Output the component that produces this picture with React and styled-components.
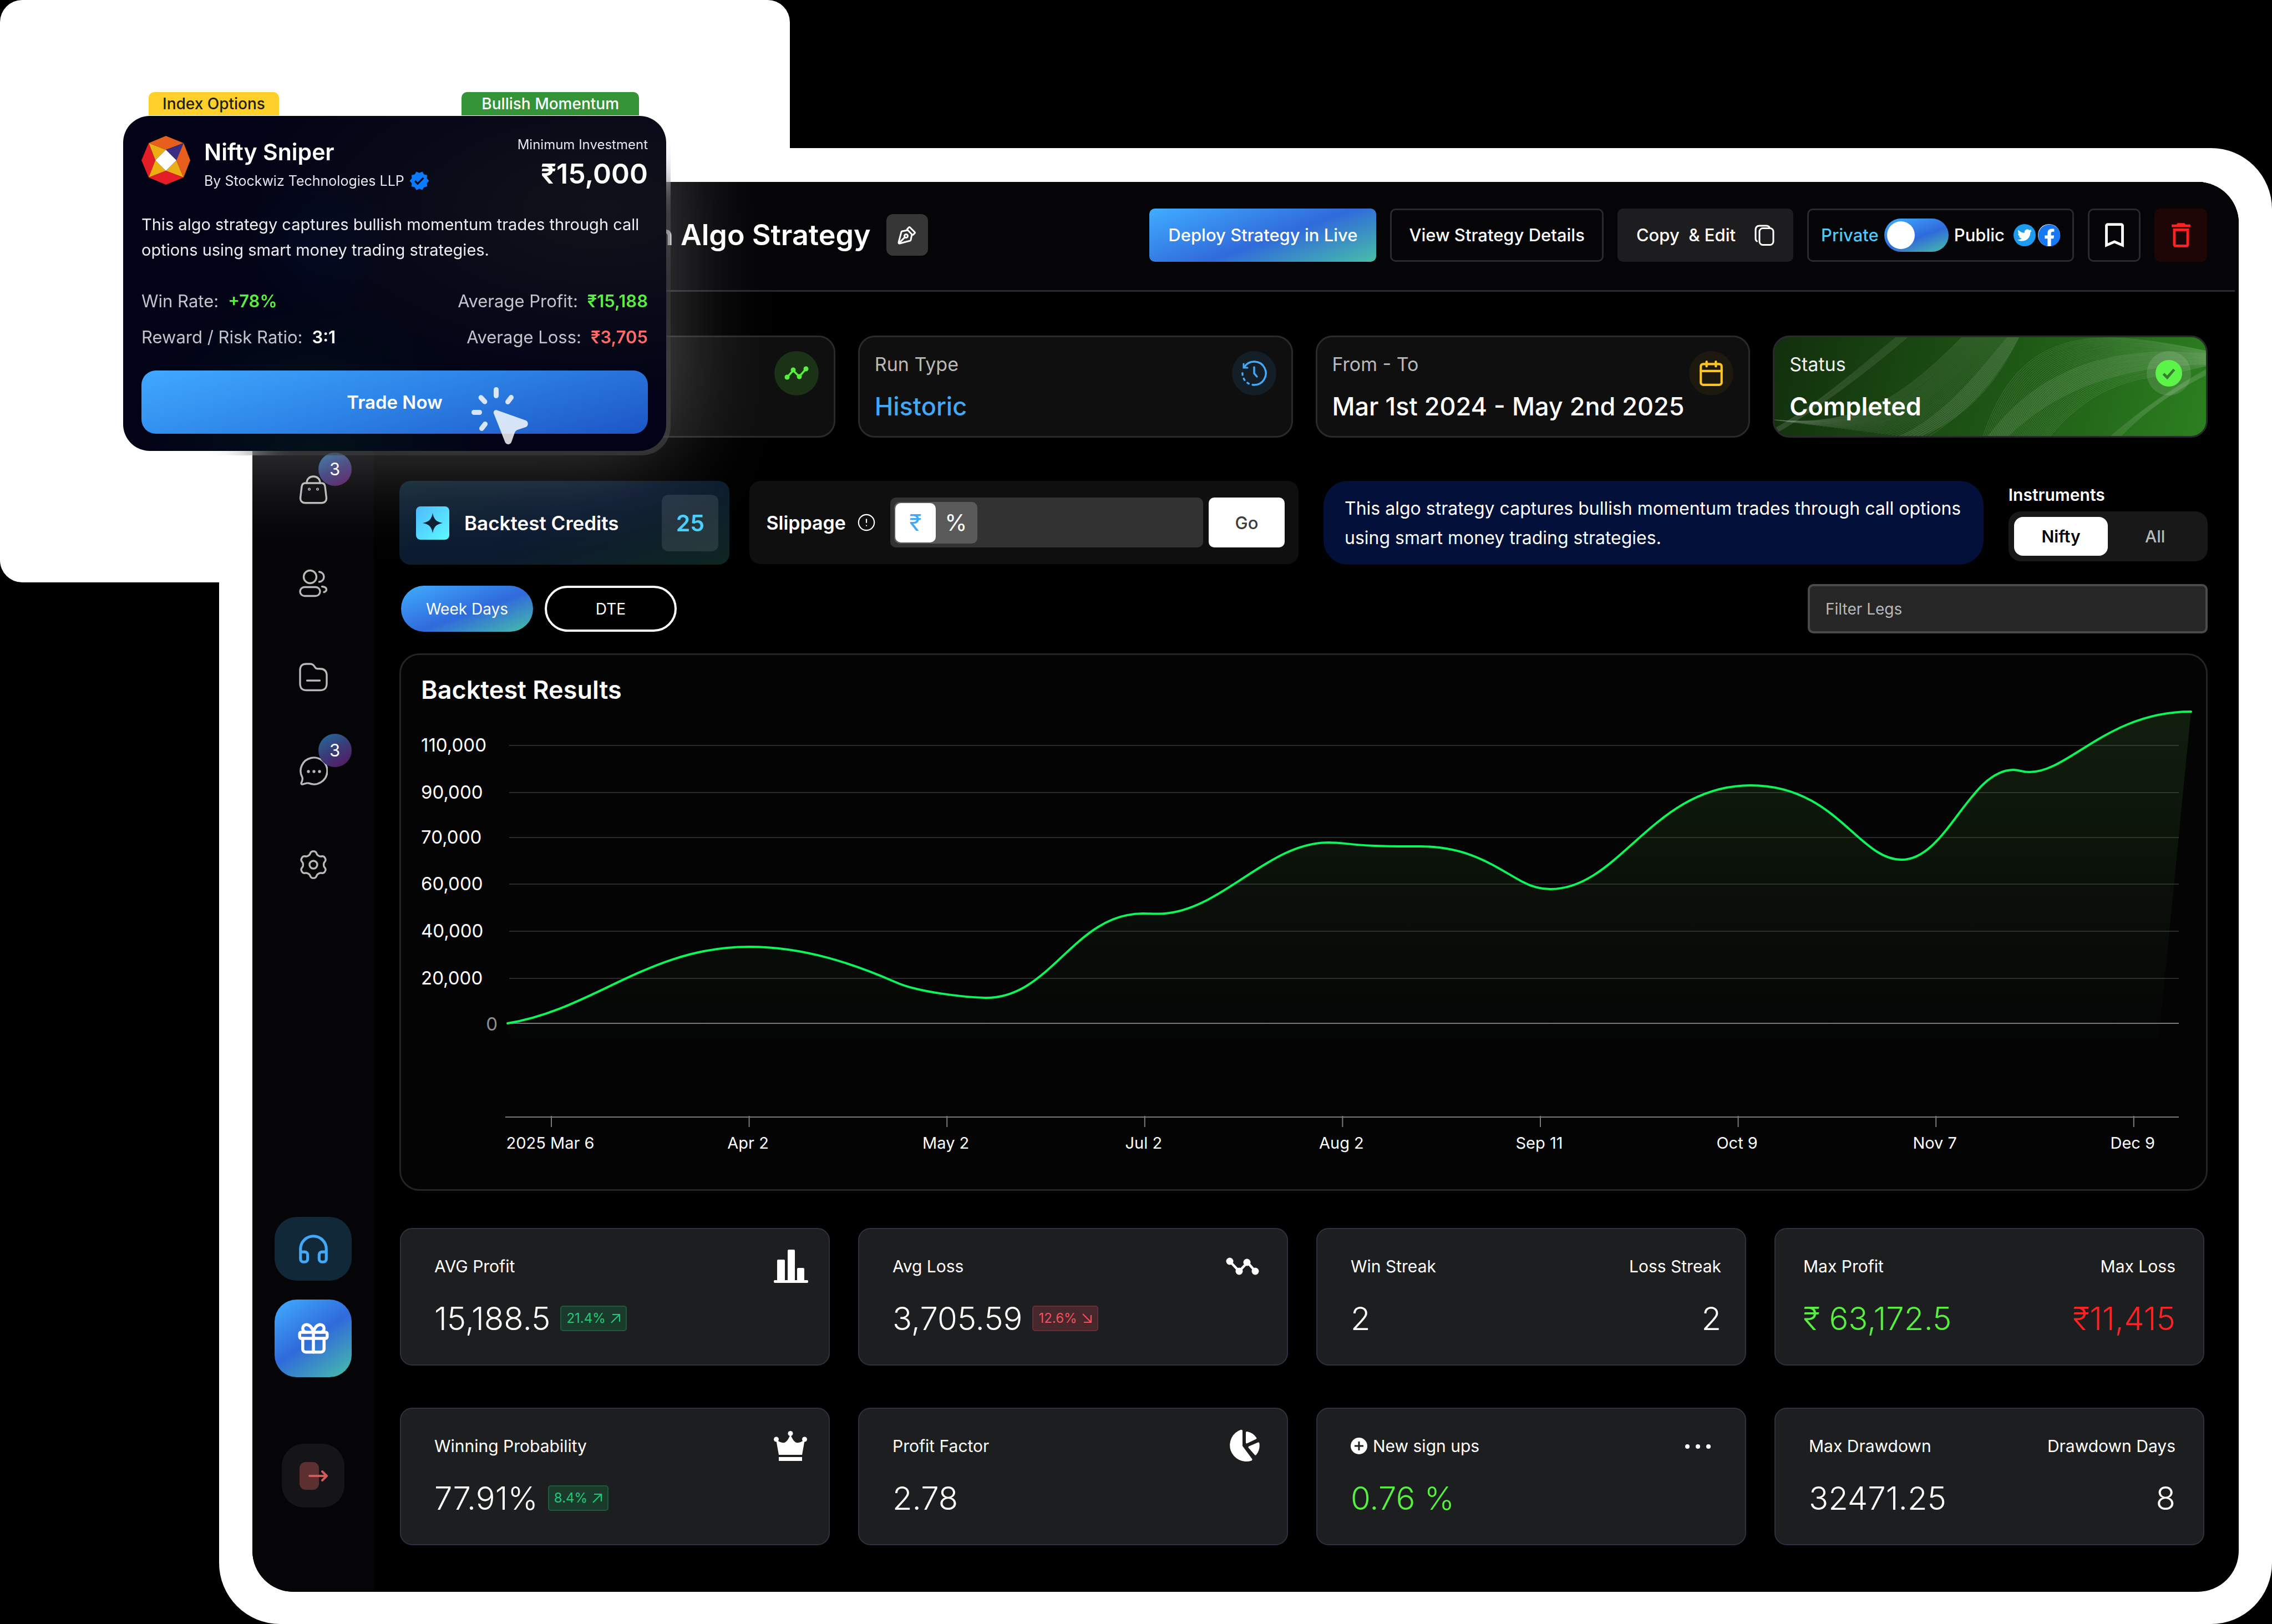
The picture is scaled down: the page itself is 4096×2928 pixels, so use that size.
import React, { useState } from "react";
import styled, { createGlobalStyle, css } from "styled-components";
import { Calendar, CircleAlert, Gift, Headphones, PenTool } from "lucide-react";
import { MdBookmarkBorder, MdDeleteOutline, MdVerified } from "react-icons/md";
import { FaFacebook, FaTwitter } from "react-icons/fa";

const GlobalStyle = createGlobalStyle`
  *, *::before, *::after { box-sizing: border-box; }
  body { margin: 0; background: #000; color: #fff; font-family: Inter, "Liberation Sans", sans-serif; }
  button, input { font: inherit; color: inherit; border: 0; background: none; padding: 0; margin: 0; }
  button { cursor: pointer; }
  h1, h2, p, dl, dt, dd { margin: 0; font-weight: inherit; font-size: inherit; }
  a { color: inherit; text-decoration: none; }
  svg { display: block; flex: none; }
`;

const brandGradient = "linear-gradient(160deg, #40adff 0%, #306adb 55%, #48bfa8 100%)";
const aqua = "#50c8f8";
const lime = "#58f03f";

/* ---------- page frame ---------- */

const Stage = styled.div`
  position: relative;
  min-height: 100vh;
  padding: 267px 0 0 395px;
  background: #000;
`;

const Backplate = styled.div`
  position: absolute;
  top: 0;
  left: 0;
  width: 1424px;
  height: 1050px;
  border-radius: 40px;
  background: #fff;
`;

const Frame = styled.div`
  position: relative;
  padding: 61px 60px 58px 60px;
  border-radius: 110px;
  border-top-left-radius: 0;
  background: #fff;
`;

const Dashboard = styled.div`
  display: flex;
  overflow: hidden;
  border-radius: 74px;
  background: #000;
`;

/* ---------- sidebar ---------- */

const Sidebar = styled.aside`
  display: flex;
  flex-direction: column;
  flex: none;
  align-items: center;
  width: 219px;
  padding: 470px 0 152px;
  background: #050507;
`;

const Nav = styled.nav`
  display: flex;
  flex-direction: column;
`;

const NavLink = styled.a`
  position: relative;
  display: grid;
  place-items: center;
  width: 140px;
  height: 169px;
  color: #b9b9b9;
`;

const NavBadge = styled.span`
  position: absolute;
  top: 18px;
  left: 79px;
  width: 60px;
  height: 60px;
  border-radius: 50%;
  background: linear-gradient(150deg, #246e9c, #3a3b78 50%, #5b1560);
  color: #fff;
  font-size: 31px;
  line-height: 60px;
  text-align: center;
`;

const SideActions = styled.div`
  display: flex;
  flex-direction: column;
  align-items: center;
  gap: 34px;
  margin-top: auto;
`;

const SideButton = styled.button`
  display: grid;
  place-items: center;
  width: ${(p) => (p.$compact ? 113 : 139)}px;
  height: ${(p) => (p.$tall ? 140 : 115)}px;
  margin-top: ${(p) => (p.$apart ? 86 : 0)}px;
  border-radius: 40px;
  background: ${(p) => p.$fill};
  color: ${(p) => p.$color};
`;

/* ---------- header ---------- */

const Main = styled.main`
  flex: 1;
  min-width: 0;
`;

const Header = styled.header`
  display: flex;
  align-items: center;
  justify-content: space-between;
  height: 198px;
  margin-right: 7px;
  padding: 0 50px 4px 508px;
  border-bottom: 3px solid #2a2a2c;
  background: #050507;
  box-shadow: 7px -3px 0 #050507;
`;

const TitleGroup = styled.div`
  display: flex;
  align-items: center;
  gap: 28px;
`;

const Title = styled.h1`
  font-size: 52px;
  font-weight: 600;
  line-height: 64px;
  white-space: nowrap;
`;

const EditButton = styled.button`
  display: grid;
  place-items: center;
  width: 75px;
  height: 75px;
  border-radius: 12px;
  background: #363637;

  svg { transform: scaleY(-1); }
`;

const Actions = styled.div`
  display: flex;
  gap: 25px;
`;

const actionBox = css`
  display: flex;
  align-items: center;
  justify-content: center;
  height: 96px;
  border-radius: 10px;
  font-size: 31px;
  font-weight: 500;
  white-space: nowrap;
`;

const ActionButton = styled.button`
  ${actionBox}
  gap: 34px;
  padding: 0 31px;
  border: 3px solid ${(p) => p.$border || "transparent"};
  background: ${(p) => p.$fill || "transparent"};
  background-origin: border-box;
  color: ${(p) => p.$color || "#fff"};
  ${(p) => p.$square && "width: 95px; padding: 0;"}
`;

const Visibility = styled.label`
  ${actionBox}
  gap: 10px;
  padding: 0 22px;
  border: 3px solid #2a2a2c;
`;

const PrivateText = styled.span`
  color: ${aqua};
`;

const Switch = styled.input.attrs({ type: "checkbox", role: "switch" })`
  appearance: none;
  position: relative;
  width: 116px;
  height: 60px;
  border-radius: 30px;
  background: ${brandGradient};

  &::after {
    content: "";
    position: absolute;
    top: 5px;
    left: 5px;
    width: 50px;
    height: 50px;
    border-radius: 50%;
    background: #fff;
  }

  &:checked::after { left: 61px; }
`;

const Socials = styled.span`
  display: flex;
  gap: 4px;
  margin-left: 6px;
`;

const SocialDot = styled.span`
  display: grid;
  place-items: center;
  width: 40px;
  height: 40px;
  border-radius: 50%;
  background: ${(p) => p.$fill};
  color: ${(p) => p.$color};
`;

/* ---------- content ---------- */

const Content = styled.div`
  display: flex;
  flex-direction: column;
  padding: 79px 56px 84px 46px;
`;

const SummaryGrid = styled.section`
  display: grid;
  grid-template-columns: repeat(4, 1fr);
  gap: 41px;
  padding-left: 2px;
`;

const SummaryCard = styled.div`
  position: relative;
  display: flex;
  justify-content: space-between;
  height: 184px;
  padding: 25px 27px;
  overflow: hidden;
  border: 3px solid #2a2a2c;
  border-radius: 30px;
  background: ${(p) => p.$fill || "#0f0f10"};
`;

const SummaryText = styled.dl`
  position: relative;
`;

const SummaryLabel = styled.dt`
  color: ${(p) => p.$color || "#b9b9b9"};
  font-size: 34px;
  line-height: 48px;
`;

const SummaryValue = styled.dd`
  padding-top: 22px;
  color: ${(p) => p.$color || "#fff"};
  font-size: 45px;
  font-weight: ${(p) => (p.$strong ? 600 : 500)};
  line-height: 60px;
  white-space: nowrap;
`;

const SummaryIcon = styled.span`
  position: relative;
  display: grid;
  place-items: center;
  flex: none;
  width: 80px;
  height: 80px;
  border-radius: 50%;
  background: ${(p) => p.$fill};
  color: ${(p) => p.$color};
`;

const WavePattern = styled.svg`
  position: absolute;
  inset: 0;
  width: 100%;
  height: 100%;
`;

const ToolRow = styled.section`
  display: grid;
  grid-template-columns: minmax(0, 1620fr) minmax(0, 1189fr) minmax(0, 359fr);
  gap: 45px;
  margin-top: 78px;
`;

const ToolPair = styled.div`
  display: grid;
  grid-template-columns: minmax(0, 595fr) minmax(0, 989fr);
  gap: 36px;
`;

const Credits = styled.div`
  display: flex;
  align-items: center;
  height: 151px;
  padding: 0 20px 0 30px;
  border-radius: 20px;
  background: linear-gradient(160deg, #0c2230 0%, #0c1a30 50%, #0f2622 100%);
  font-size: 35px;
  font-weight: 600;
  white-space: nowrap;
`;

const CreditsMark = styled.span`
  display: grid;
  place-items: center;
  width: 60px;
  height: 60px;
  margin-right: 27px;
  border-radius: 8px;
  background: linear-gradient(135deg, #48b8ff, #5cfaff);
`;

const CreditsCount = styled.strong`
  display: grid;
  place-items: center;
  width: 102px;
  height: 102px;
  margin-left: auto;
  border-radius: 12px;
  background: rgba(255, 255, 255, 0.1);
  color: #4ccffb;
  font-size: 41px;
  font-weight: 600;
`;

const Slippage = styled.form`
  display: flex;
  align-items: center;
  height: 150px;
  padding: 0 25px 0 30px;
  border-radius: 20px;
  background: #0f0f10;
`;

const SlippageLabel = styled.label`
  display: flex;
  align-items: center;
  gap: 20px;
  margin-right: 26px;
  font-size: 34px;
  font-weight: 600;
`;

const AmountBox = styled.div`
  display: flex;
  align-items: center;
  flex: 1;
  min-width: 0;
  height: 90px;
  padding: 0 7px;
  border-radius: 10px;
  background: #323232;
`;

const AmountInput = styled.input`
  flex: 1;
  min-width: 0;
  height: 76px;
  padding: 0 20px;
  outline: 0;
  font-size: 31px;
`;

const UnitToggle = styled.div`
  display: flex;
  flex: none;
  width: 150px;
  padding: 2px;
  border-radius: 10px;
  background: #5a5a5a;
`;

const UnitButton = styled.button`
  flex: 1;
  height: 71px;
  border-radius: 10px;
  background: ${(p) => (p.$active ? "#fff" : "transparent")};
  color: ${(p) => (p.$active ? "#42a8f8" : "#fff")};
  font-size: 41px;
`;

const GoButton = styled.button`
  width: 137px;
  height: 90px;
  margin-left: 10px;
  border-radius: 10px;
  background: #fff;
  color: #3c3c3e;
  font-size: 31px;
  font-weight: 500;
`;

const Note = styled.p`
  display: flex;
  align-items: center;
  height: 151px;
  padding: 0 38px;
  border-radius: 44px;
  background: #02103a;
  font-size: 32px;
  line-height: 53px;
`;

const Instruments = styled.div`
  display: flex;
  flex-direction: column;
  font-size: 30px;
  font-weight: 600;
  line-height: 50px;
`;

const Segments = styled.div`
  display: flex;
  margin-top: 5px;
  padding: 10px;
  border-radius: 22px;
  background: #181819;
`;

const Segment = styled.button`
  flex: 1;
  height: 70px;
  border-radius: 16px;
  background: ${(p) => (p.$active ? "#fff" : "transparent")};
  color: ${(p) => (p.$active ? "#050507" : "#b9b9b9")};
  font-size: 30px;
  font-weight: ${(p) => (p.$active ? 600 : 500)};
`;

const FilterRow = styled.section`
  display: flex;
  align-items: center;
  justify-content: space-between;
  margin-top: 35px;
`;

const Pills = styled.div`
  display: flex;
  gap: 21px;
  padding-left: 3px;
`;

const Pill = styled.button`
  width: 238px;
  height: 83px;
  border: ${(p) => (p.$active ? "0" : "4px solid #fff")};
  border-radius: 42px;
  background: ${(p) => (p.$active ? brandGradient : "transparent")};
  font-size: 28px;
`;

const FilterInput = styled.input`
  width: 721px;
  height: 89px;
  padding: 0 28px;
  border: 4px solid #4a4a4b;
  border-radius: 10px;
  background: #262626;
  font-size: 28px;

  &::placeholder { color: #b9b9b9; opacity: 1; }
`;

/* ---------- chart ---------- */

const ChartCard = styled.section`
  margin-top: 36px;
  padding-top: 36px;
  border: 3px solid #242426;
  border-radius: 36px;
  background: #040405;
`;

const ChartTitle = styled.h2`
  padding-left: 36px;
  font-size: 45px;
  font-weight: 600;
  line-height: 54px;
`;

const ChartSvg = styled.svg`
  width: 100%;
  height: auto;
`;

const AxisText = styled.text`
  fill: ${(p) => (p.$muted ? "#8f8f8f" : "#fff")};
  font-size: ${(p) => (p.$small ? 29 : 33)}px;
`;

/* ---------- stats ---------- */

const StatsGrid = styled.section`
  display: grid;
  grid-template-columns: repeat(4, 1fr);
  gap: 76px 51px;
  margin-top: 67px;
  padding: 0 6px 0 1px;
`;

const StatCard = styled.article`
  display: flex;
  justify-content: space-between;
  height: 248px;
  padding: 36px ${(p) => p.$end}px 0 ${(p) => p.$start || 60}px;
  border: 2px solid #2e323e;
  border-radius: 22px;
  background: #1d1e1f;
`;

const Stat = styled.dl`
  padding-top: 10px;
  text-align: ${(p) => (p.$right ? "right" : "left")};
`;

const StatLabel = styled.dt`
  display: flex;
  align-items: center;
  justify-content: ${(p) => (p.$right ? "flex-end" : "flex-start")};
  gap: 10px;
  font-size: 30px;
  line-height: 42px;
`;

const StatValue = styled.dd`
  display: flex;
  align-items: center;
  justify-content: ${(p) => (p.$right ? "flex-end" : "flex-start")};
  gap: 18px;
  padding-top: 35px;
  color: ${(p) => p.$color || "#fff"};
  font-size: 58px;
  font-weight: 300;
  line-height: 76px;
  white-space: nowrap;
`;

const Delta = styled.span`
  display: flex;
  align-items: center;
  gap: 8px;
  height: 46px;
  padding: 0 9px;
  border: 2px solid ${(p) => (p.$down ? "#6b2b33" : "#1d5a3b")};
  border-radius: 5px;
  background: ${(p) => (p.$down ? "#46272b" : "#1a3a2b")};
  color: ${(p) => (p.$down ? "#f0525f" : "#22c878")};
  font-size: 24px;
  font-weight: 400;
  line-height: 40px;
`;

const StatIcon = styled.span`
  display: grid;
  place-items: center;
  width: 62px;
  height: 62px;
`;

const MoreButton = styled.button`
  display: flex;
  gap: 11px;
  height: 14px;
  margin-top: 28px;

  i {
    width: 8px;
    height: 8px;
    border-radius: 50%;
    background: #fff;
  }
`;

/* ---------- floating strategy card ---------- */

const Promo = styled.aside`
  position: absolute;
  top: 166px;
  left: 222px;
  width: 979px;
`;

const Tabs = styled.div`
  position: relative;
  z-index: 1;
  display: flex;
  justify-content: space-between;
  padding: 0 49px 0 46px;
`;

const Tab = styled.span`
  padding: 0 ${(p) => (p.$wide ? 36 : 25)}px;
  border-radius: 10px 10px 0 0;
  background: ${(p) => p.$fill};
  color: ${(p) => p.$color};
  font-size: 28px;
  font-weight: 500;
  line-height: 42px;
`;

const Glass = styled.div`
  position: relative;
  margin: 1px -8px 0 0;
  padding: 0 8px 8px 0;
  border-radius: 52px;
  background: rgba(255, 255, 255, 0.19);
  backdrop-filter: blur(36px);
  box-shadow: 0 0 180px rgba(255, 255, 255, 0.27);
`;

const PromoCard = styled.div`
  padding: 36px 33px 31px;
  border-radius: 48px;
  background:
    radial-gradient(circle at 36% 38%, rgba(0, 20, 60, 0.3), transparent 18%),
    radial-gradient(ellipse at 88% 28%, #10121a, transparent 55%),
    radial-gradient(ellipse at 35% 100%, #03111a, transparent 35%),
    #020316;
`;

const PromoHead = styled.div`
  display: flex;
  justify-content: space-between;
`;

const PromoIdentity = styled.div`
  display: flex;
  gap: 25px;
`;

const PromoName = styled.h2`
  font-size: 41px;
  font-weight: 600;
  line-height: 58px;
`;

const PromoAuthor = styled.p`
  display: flex;
  align-items: center;
  gap: 8px;
  color: #e6e6ee;
  font-size: 25px;
  line-height: 46px;

  svg { color: #0a7cff; }
`;

const PromoPrice = styled.div`
  color: #e6e6ee;
  font-size: 24px;
  line-height: 32px;
  text-align: right;

  strong {
    display: block;
    color: #fff;
    font-size: 50px;
    font-weight: 600;
    line-height: 72px;
  }
`;

const PromoText = styled.p`
  margin-top: 33px;
  color: #eeeef2;
  font-size: 29px;
  line-height: 46px;
`;

const PromoStats = styled.dl`
  display: grid;
  grid-template-columns: auto auto;
  justify-content: space-between;
  gap: 25px 0;
  margin-top: 49px;
  font-size: 31px;
  line-height: 40px;
`;

const PromoStat = styled.div`
  display: flex;
  justify-content: ${(p) => (p.$right ? "flex-end" : "flex-start")};
  gap: 17px;

  dt { color: #c3c4cc; }
  dd { color: ${(p) => p.$color || "#fff"}; font-weight: 600; }
`;

const TradeButton = styled.button`
  position: relative;
  width: 100%;
  height: 114px;
  margin-top: 40px;
  border-radius: 26px;
  background: linear-gradient(165deg, #40a9ff 0%, #2e86e8 45%, #1d55c6 100%);
  font-size: 33px;
  font-weight: 600;

  svg {
    position: absolute;
    top: 30px;
    left: 595px;
  }
`;

/* ---------- drawings ---------- */

const lineIcon = {
  width: 52,
  height: 52,
  viewBox: "0 0 52 52",
  fill: "none",
  stroke: "currentColor",
  strokeWidth: 3.4,
  strokeLinecap: "round",
  strokeLinejoin: "round",
};

const BagIcon = () => (
  <svg {...lineIcon}>
    <path d="M11.500 14h29c4 0 6 2.200 6.500 6l2.400 20c.6 6-3 9.800-9 9.800H11.600c-6 0-9.600-3.800-9-9.800L5 20c.5-3.800 2.500-6 6.500-6z" />
    <path d="M14 14C14 6.500 19 2 26 2s12 4.500 12 12" />
    <circle cx="18.500" cy="25" r="0.800" />
    <circle cx="33.500" cy="25" r="0.800" />
  </svg>
);

const UsersIcon = () => (
  <svg {...lineIcon}>
    <circle cx="20" cy="14" r="11.500" />
    <rect x="2" y="32.500" width="36" height="16" rx="8" ry="8" />
    <path d="M36.500 5c5 .5 8.500 4.300 8.500 9s-3.500 8.500-8.500 9" />
    <path d="M41.500 31.500c5 .5 8 2.500 8 5.200 0 2.300-1.500 4-4.500 4.800" />
  </svg>
);

const FolderIcon = () => (
  <svg {...lineIcon}>
    <path d="M2 16v-2C2 5.500 5.500 2 14 2h6c4 0 5.500 1 7.500 4l2 2.800c1 1.500 2.200 2 4.500 2h3.500C46 10.800 50 14.500 50 23v14c0 9-4 12.500-12.500 12.500H14C5.500 49.500 2 46 2 37z" />
    <path d="M14.500 32h23" />
  </svg>
);

const ChatIcon = () => (
  <svg {...lineIcon}>
    <path d="M18 48.200A24 24 0 1 0 6 37.600c1 3 .2 5.600-1.600 9.400-.8 2 .2 3.400 2.200 3 3.900-.6 7.900-3.200 11.400-1.800z" />
    <g fill="currentColor" strokeWidth="1.500">
      <circle cx="17" cy="27" r="1.900" />
      <circle cx="27" cy="27" r="1.900" />
      <circle cx="37" cy="27" r="1.900" />
    </g>
  </svg>
);

const gearPath = (() => {
  const points = [];
  for (let i = 0; i < 180; i += 1) {
    const a = (i / 180) * Math.PI * 2;
    const r = 21.4 - 3 * Math.tanh(1.5 * Math.cos(6 * a));
    points.push(`${(26 + r * Math.cos(a)).toFixed(2)} ${(26 + r * Math.sin(a)).toFixed(2)}`);
  }
  return `M${points.join("L")}Z`;
})();

const GearIcon = () => (
  <svg {...lineIcon}>
    <path d={gearPath} />
    <circle cx="26" cy="26" r="7" />
  </svg>
);

const ExitIcon = () => (
  <svg width="52" height="52" viewBox="0 0 52 52" fill="none" stroke="#cf5a5a" strokeWidth="4" strokeLinecap="round" strokeLinejoin="round">
    <rect x="1" y="1" width="35" height="50" rx="11" fill="#5c3031" stroke="none" />
    <path d="M19 26h31M42 18l8 8-8 8" />
  </svg>
);

const CopyIcon = () => (
  <svg width="36" height="38" viewBox="0 0 36 38" fill="none" stroke="currentColor" strokeWidth="3">
    <rect x="9" y="6.500" width="25" height="30" rx="6" />
    <path d="M4.500 30C2.800 29 2 27.500 2 25V9.500C2 4.500 4.500 2 9.500 2H21c3 0 5 .8 6.200 3" strokeLinecap="round" />
  </svg>
);

const HistoryIcon = () => (
  <svg width="48" height="48" viewBox="0 0 48 48" fill="none" stroke="currentColor" strokeWidth="3.500" strokeLinecap="round">
    <path d="M24 45a21 21 0 1 0-17.500-32.500" />
    <path d="M24 45A21 21 0 0 1 3.500 19" strokeDasharray="3 7" />
    <path d="M5 7v7h7" strokeWidth="3" />
    <path d="M24 13v11l5 6" />
  </svg>
);

const CheckIcon = () => (
  <svg width="48" height="48" viewBox="0 0 50 50">
    <circle cx="25" cy="25" r="25" fill="#5cf449" />
    <path d="M15 26l7 7 13-15" fill="none" stroke="#3a7a31" strokeWidth="5" />
  </svg>
);

const TrendIcon = () => (
  <svg width="44" height="26" viewBox="0 0 44 26" fill="currentColor">
    <path d="M5 20L16 8l11 11L39 5" fill="none" stroke="currentColor" strokeWidth="3.500" />
    <circle cx="5" cy="20" r="4.500" />
    <circle cx="16" cy="7" r="4.500" />
    <circle cx="27" cy="19" r="4.500" />
    <circle cx="39" cy="5" r="4.500" />
  </svg>
);

const SparkIcon = () => (
  <svg width="36" height="36" viewBox="0 0 36 36" fill="#0d1d30">
    <path d="M18 0c2 10.500 6 16 18 18-12 2-16 7.500-18 18-2-10.500-6-16-18-18C12 16 16 10.500 18 0z" />
  </svg>
);

const BarsIcon = () => (
  <svg width="62" height="60" viewBox="0 0 62 60" fill="#fff">
    <rect x="6" y="18" width="14" height="40" rx="2" />
    <rect x="25" y="0" width="13" height="58" rx="2" />
    <rect x="42" y="33" width="13" height="25" rx="2" />
    <rect x="0" y="55" width="62" height="5" rx="2" />
  </svg>
);

const DropIcon = () => (
  <svg width="60" height="34" viewBox="0 0 60 34" fill="#fff">
    <path d="M7 8l17 18L39 10l14 16" fill="none" stroke="#fff" strokeWidth="4.500" />
    <circle cx="7" cy="8" r="6.500" />
    <circle cx="24" cy="26" r="6.500" />
    <circle cx="38" cy="10" r="6.500" />
    <circle cx="53" cy="26" r="6.500" />
  </svg>
);

const CrownIcon = () => (
  <svg width="60" height="54" viewBox="0 0 60 54" fill="#fff">
    <path d="M4 15c6 5 11 7 15 6 4-1 8-7 11-15 3 8 7 14 11 15 4 1 9-1 15-6l-5 28H9z" />
    <circle cx="4.500" cy="15" r="4.500" />
    <circle cx="30" cy="4.500" r="4.500" />
    <circle cx="55.500" cy="15" r="4.500" />
    <rect x="9" y="47" width="42" height="7" />
  </svg>
);

const PieIcon = () => (
  <svg width="58" height="60" viewBox="0 0 58 60" fill="#fff">
    <path d="M27 3v27l17 23c1 1.500.8 2.500-.8 3.400A29 29 0 1 1 24 .8c2-.2 3 .6 3 2.200z" />
    <path d="M33 6c0-1.500.8-2.400 2.500-2A26 26 0 0 1 52 15c.8 1.200.5 2-.8 2.700L36 25c-2 1-3 .3-3-1.600z" />
    <path d="M54.500 23.800c1.600-.7 2.600-.2 2.900 1.500a27 27 0 0 1-5.500 20.500c-1.100 1.400-2.200 1.400-3.200 0L38 33.500c-.9-1.300-.7-2.300.8-3z" />
  </svg>
);

const PlusDot = () => (
  <svg width="30" height="30" viewBox="0 0 30 30">
    <circle cx="15" cy="15" r="15" fill="#fff" />
    <path d="M15 7v16M7 15h16" stroke="#1d1e1f" strokeWidth="3" />
  </svg>
);

const DeltaArrow = ({ down }) => (
  <svg width="19" height="18" viewBox="0 0 19 18" fill="none" stroke="currentColor" strokeWidth="2.200">
    {down ? <path d="M2 1l15 15M17 3v13H4" /> : <path d="M2 17L17 2M4 2h13v13" />}
  </svg>
);

const NiftyLogo = () => (
  <svg width="88" height="88" viewBox="0 0 88 88">
    <path d="M44 0l32 13-32 12-31-12z" fill="#e65f1c" />
    <path d="M76 13L63 44 44 25z" fill="#3a2e82" />
    <path d="M13 13l31 12-19 19z" fill="#ecae12" />
    <path d="M13 13l12 31-12 31L0 44z" fill="#e41e26" />
    <path d="M13 75l12-31 19 19z" fill="#ecae12" />
    <path d="M76 75L44 63l19-19z" fill="#ecae12" />
    <path d="M76 13l12 31-12 31-13-31z" fill="#e65f1c" />
    <path d="M13 75l31-12 32 12-32 13z" fill="#e41e26" />
    <path d="M44 25l19 19-19 19-19-19z" fill="#fff" />
  </svg>
);

const ClickIcon = () => (
  <svg width="104" height="104" viewBox="0 0 104 104" fill="#fff" fillOpacity="0.82">
    <rect x="40" y="0" width="9" height="20" rx="4.500" />
    <rect x="0" y="41" width="19" height="9" rx="4.500" />
    <rect x="11" y="18" width="19" height="9" rx="4.500" transform="rotate(47 20.500 22.500)" />
    <rect x="59" y="18" width="19" height="9" rx="4.500" transform="rotate(-52 68.500 22.500)" />
    <rect x="12" y="66" width="19" height="9" rx="4.500" transform="rotate(-52 21.500 70.500)" />
    <path d="M40 47c-1-4 2.500-7 6.500-5.300L98 60c5 2 5 10 0 12L83 77c-2.500 1-4 2.500-5 5l-6 17c-2 5.500-9.500 5.500-11.500 0z" />
  </svg>
);

const lerpPath = (a, b, t) => {
  const n = a.map((v, i) => (v + (b[i] - v) * t).toFixed(1));
  return `M${n[0]} ${n[1]}C${n.slice(2).join(" ")}`;
};

const ribbons = [
  { from: [-10, 148, 150, 165, 230, 110, 342, -4], to: [270, 184, 340, 140, 390, 90, 443, -4], lines: 44 },
  { from: [374, 184, 440, -20, 570, -20, 783, 26], to: [492, 184, 590, 60, 680, 80, 783, 50], lines: 40 },
  { from: [-10, 170, 60, 135, 160, 50, 224, -4], to: [-6, 178, 70, 135, 170, 60, 244, -4], lines: 9 },
  { from: [600, 184, 660, 130, 720, 90, 783, 55], to: [618, 184, 670, 130, 730, 90, 790, 62], lines: 9 },
];

const Waves = () => (
  <WavePattern viewBox="0 0 777 178" preserveAspectRatio="none" fill="none" stroke="#fff" aria-hidden="true">
    {ribbons.map((r, k) =>
      Array.from({ length: r.lines }, (_, i) => (
        <path key={`${k}-${i}`} d={lerpPath(r.from, r.to, i / (r.lines - 1))} strokeOpacity="0.11" strokeWidth="1.300" />
      ))
    )}
    <path d="M210 184C300 150 360 70 422-4h20C410 70 350 150 250 184z" fill="#fff" fillOpacity="0.08" stroke="none" />
    <path d="M380 184C470 60 600 10 783 30v20C620 50 500 100 416 184z" fill="#fff" fillOpacity="0.08" stroke="none" />
  </WavePattern>
);

/* ---------- data ---------- */

const yTicks = [
  ["110,000", 1344],
  ["90,000", 1429],
  ["70,000", 1510],
  ["60,000", 1594],
  ["40,000", 1679],
  ["20,000", 1764],
];

const xTicks = ["2025 Mar 6", "Apr 2", "May 2", "Jul 2", "Aug 2", "Sep 11", "Oct 9", "Nov 7", "Dec 9"];

const curvePath = [
  "M915 1845",
  "C1070 1820 1170 1707 1350 1707",
  "C1450 1707 1540 1738 1615 1771",
  "C1655 1789 1740 1798 1776 1799",
  "C1895 1801 1935 1647 2061 1647",
  "C2076 1647 2088 1649 2108 1646",
  "C2210 1632 2290 1519 2395 1519",
  "C2430 1519 2440 1527 2560 1526",
  "C2650 1526 2695 1563 2745 1590",
  "C2762 1599 2778 1603 2795 1603",
  "C2920 1603 2980 1416 3156 1416",
  "C3310 1416 3350 1550 3428 1550",
  "C3510 1550 3550 1388 3630 1388",
  "C3640 1388 3645 1392 3659 1392",
  "C3730 1392 3800 1283 3950 1283",
].join("");

const BacktestChart = () => (
  <ChartSvg viewBox="723 1271 3254 873" role="img" aria-label="Backtest results from March to December">
    <defs>
      <linearGradient id="area" x1="0" y1="0" x2="0" y2="1">
        <stop offset="0" stopColor="#3f7a2c" stopOpacity="0.22" />
        <stop offset="1" stopColor="#3f7a2c" stopOpacity="0.01" />
      </linearGradient>
    </defs>
    {yTicks.map(([label, y]) => (
      <g key={label}>
        <line x1="918" x2="3928" y1={y} y2={y} stroke="#2a2a2b" strokeWidth="2" />
        <AxisText x="759" y={y + 11}>{label}</AxisText>
      </g>
    ))}
    <path d={`${curvePath}L3892 1871L915 1871Z`} fill="url(#area)" />
    <line x1="918" x2="3928" y1="1845" y2="1845" stroke="#7a7a7a" strokeWidth="2" />
    <AxisText x="897" y="1858" textAnchor="end" $muted>0</AxisText>
    <path d={curvePath} fill="none" stroke="#0df55a" strokeWidth="4" strokeLinecap="round" />
    <line x1="911" x2="3928" y1="2014" y2="2014" stroke="#7a7a7a" strokeWidth="2" />
    {xTicks.map((label, i) => {
      const x = 994 + i * 356.6;
      return (
        <g key={label}>
          <line x1={x} x2={x} y1="2012" y2="2032" stroke="#7a7a7a" strokeWidth="2" />
          <AxisText x={x - 2} y="2071" textAnchor="middle" $small>{label}</AxisText>
        </g>
      );
    })}
  </ChartSvg>
);

const navItems = [
  { label: "Orders", Icon: BagIcon, count: 3 },
  { label: "Clients", Icon: UsersIcon },
  { label: "Files", Icon: FolderIcon },
  { label: "Messages", Icon: ChatIcon, count: 3 },
  { label: "Settings", Icon: GearIcon },
];

const statCards = [
  { end: 37, icon: BarsIcon, stats: [{ label: "AVG Profit", value: "15,188.5", delta: "21.4%" }] },
  { end: 49, icon: DropIcon, stats: [{ label: "Avg Loss", value: "3,705.59", delta: "12.6%", down: true }] },
  { end: 43, stats: [{ label: "Win Streak", value: "2" }, { label: "Loss Streak", value: "2" }] },
  {
    start: 50,
    end: 50,
    stats: [
      { label: "Max Profit", value: "₹ 63,172.5", color: lime },
      { label: "Max Loss", value: "₹11,415", color: "#ff2222" },
    ],
  },
  { end: 38, icon: CrownIcon, stats: [{ label: "Winning Probability", value: "77.91%", delta: "8.4%" }] },
  { end: 47, icon: PieIcon, stats: [{ label: "Profit Factor", value: "2.78" }] },
  { end: 62, more: true, stats: [{ label: "New sign ups", value: "0.76 %", color: lime, plus: true }] },
  { end: 50, stats: [{ label: "Max Drawdown", value: "32471.25" }, { label: "Drawdown Days", value: "8" }] },
];

export default function App() {
  const [unit, setUnit] = useState("₹");
  const [instrument, setInstrument] = useState("Nifty");
  const [mode, setMode] = useState("Week Days");

  return (
    <Stage>
      <GlobalStyle />
      <Backplate />
      <Frame>
        <Dashboard>
          <Sidebar>
            <Nav aria-label="Main">
              {navItems.map(({ label, Icon, count }) => (
                <NavLink key={label} href={`#${label.toLowerCase()}`} aria-label={label}>
                  <Icon />
                  {count && <NavBadge>{count}</NavBadge>}
                </NavLink>
              ))}
            </Nav>
            <SideActions>
              <SideButton $fill="#112838" $color="#42a8f8" aria-label="Support">
                <Headphones size={62} strokeWidth={2} />
              </SideButton>
              <SideButton $fill="linear-gradient(145deg, #40adff 0%, #306adb 50%, #48bfa8 100%)" $color="#fff" $tall aria-label="Rewards">
                <Gift size={66} strokeWidth={2} />
              </SideButton>
              <SideButton $fill="#151517" $compact $apart aria-label="Log out">
                <ExitIcon />
              </SideButton>
            </SideActions>
          </Sidebar>

          <Main>
            <Header>
              <TitleGroup>
                <Title>n Algo Strategy</Title>
                <EditButton aria-label="Rename strategy">
                  <PenTool size={36} strokeWidth={2} />
                </EditButton>
              </TitleGroup>
              <Actions>
                <ActionButton $fill={brandGradient}>Deploy Strategy in Live</ActionButton>
                <ActionButton $border="#2a2a2c">View Strategy Details</ActionButton>
                <ActionButton $fill="#1d1d1f">
                  Copy&nbsp; &amp; Edit
                  <CopyIcon />
                </ActionButton>
                <Visibility>
                  <PrivateText>Private</PrivateText>
                  <Switch aria-label="Public strategy" />
                  Public
                  <Socials>
                    <SocialDot $fill="#1d9bf0" $color="#fff">
                      <FaTwitter size={26} />
                    </SocialDot>
                    <SocialDot $fill="#fff" $color="#1877f2">
                      <FaFacebook size={41} />
                    </SocialDot>
                  </Socials>
                </Visibility>
                <ActionButton $square $border="#2a2a2c" aria-label="Bookmark">
                  <MdBookmarkBorder size={58} />
                </ActionButton>
                <ActionButton $square $fill="#1e0607" $color="#ff2222" aria-label="Delete">
                  <MdDeleteOutline size={58} />
                </ActionButton>
              </Actions>
            </Header>

            <Content>
              <SummaryGrid>
                <SummaryCard>
                  <span />
                  <SummaryIcon $fill="#1b3216" $color={lime}>
                    <TrendIcon />
                  </SummaryIcon>
                </SummaryCard>
                <SummaryCard>
                  <SummaryText>
                    <SummaryLabel>Run Type</SummaryLabel>
                    <SummaryValue $color="#42a8f8">Historic</SummaryValue>
                  </SummaryText>
                  <SummaryIcon $fill="#131e27" $color="#42a8f8">
                    <HistoryIcon />
                  </SummaryIcon>
                </SummaryCard>
                <SummaryCard>
                  <SummaryText>
                    <SummaryLabel>From - To</SummaryLabel>
                    <SummaryValue>Mar 1st 2024 - May 2nd 2025</SummaryValue>
                  </SummaryText>
                  <SummaryIcon $fill="#1d190f" $color="#fcc521">
                    <Calendar size={50} strokeWidth={2} />
                  </SummaryIcon>
                </SummaryCard>
                <SummaryCard $fill="linear-gradient(105deg, #122f0d 0%, #1d5514 50%, #2c8020 100%)">
                  <Waves />
                  <SummaryText>
                    <SummaryLabel $color="#f2f2f2">Status</SummaryLabel>
                    <SummaryValue $strong>Completed</SummaryValue>
                  </SummaryText>
                  <SummaryIcon $fill="rgba(255, 255, 255, 0.12)">
                    <CheckIcon />
                  </SummaryIcon>
                </SummaryCard>
              </SummaryGrid>

              <ToolRow>
                <ToolPair>
                  <Credits>
                    <CreditsMark>
                      <SparkIcon />
                    </CreditsMark>
                    Backtest Credits
                    <CreditsCount>25</CreditsCount>
                  </Credits>
                  <Slippage onSubmit={(e) => e.preventDefault()}>
                    <SlippageLabel htmlFor="slippage">
                      Slippage
                      <CircleAlert size={34} strokeWidth={1.5} />
                    </SlippageLabel>
                    <AmountBox>
                      <UnitToggle>
                        {["₹", "%"].map((u) => (
                          <UnitButton key={u} type="button" $active={unit === u} aria-pressed={unit === u} onClick={() => setUnit(u)}>
                            {u}
                          </UnitButton>
                        ))}
                      </UnitToggle>
                      <AmountInput id="slippage" />
                    </AmountBox>
                    <GoButton>Go</GoButton>
                  </Slippage>
                </ToolPair>
                <Note>This algo strategy captures bullish momentum trades through call options using smart money trading strategies.</Note>
                <Instruments>
                  Instruments
                  <Segments>
                    {["Nifty", "All"].map((s) => (
                      <Segment key={s} $active={instrument === s} aria-pressed={instrument === s} onClick={() => setInstrument(s)}>
                        {s}
                      </Segment>
                    ))}
                  </Segments>
                </Instruments>
              </ToolRow>

              <FilterRow>
                <Pills>
                  {["Week Days", "DTE"].map((m) => (
                    <Pill key={m} $active={mode === m} aria-pressed={mode === m} onClick={() => setMode(m)}>
                      {m}
                    </Pill>
                  ))}
                </Pills>
                <FilterInput placeholder="Filter Legs" aria-label="Filter Legs" />
              </FilterRow>

              <ChartCard>
                <ChartTitle>Backtest Results</ChartTitle>
                <BacktestChart />
              </ChartCard>

              <StatsGrid>
                {statCards.map(({ start, end, icon: Icon, more, stats }) => (
                  <StatCard key={stats[0].label} $start={start} $end={end}>
                    {stats.map((s, i) => (
                      <Stat key={s.label} $right={i > 0}>
                        <StatLabel $right={i > 0}>
                          {s.plus && <PlusDot />}
                          {s.label}
                        </StatLabel>
                        <StatValue $right={i > 0} $color={s.color}>
                          {s.value}
                          {s.delta && (
                            <Delta $down={s.down}>
                              {s.delta}
                              <DeltaArrow down={s.down} />
                            </Delta>
                          )}
                        </StatValue>
                      </Stat>
                    ))}
                    {Icon && (
                      <StatIcon>
                        <Icon />
                      </StatIcon>
                    )}
                    {more && (
                      <MoreButton aria-label="More">
                        <i />
                        <i />
                        <i />
                      </MoreButton>
                    )}
                  </StatCard>
                ))}
              </StatsGrid>
            </Content>
          </Main>
        </Dashboard>
      </Frame>

      <Promo>
        <Tabs>
          <Tab $fill="#ffcf2a" $color="#22210f">Index Options</Tab>
          <Tab $fill="#359438" $color="#fff" $wide>Bullish Momentum</Tab>
        </Tabs>
        <Glass>
          <PromoCard>
            <PromoHead>
              <PromoIdentity>
                <NiftyLogo />
                <div>
                  <PromoName>Nifty Sniper</PromoName>
                  <PromoAuthor>
                    By Stockwiz Technologies LLP
                    <MdVerified size={38} />
                  </PromoAuthor>
                </div>
              </PromoIdentity>
              <PromoPrice>
                Minimum Investment
                <strong>₹15,000</strong>
              </PromoPrice>
            </PromoHead>
            <PromoText>
              This algo strategy captures bullish momentum trades through call options using smart money trading strategies.
            </PromoText>
            <PromoStats>
              <PromoStat $color={lime}>
                <dt>Win Rate:</dt>
                <dd>+78%</dd>
              </PromoStat>
              <PromoStat $right $color={lime}>
                <dt>Average Profit:</dt>
                <dd>₹15,188</dd>
              </PromoStat>
              <PromoStat>
                <dt>Reward / Risk Ratio:</dt>
                <dd>3:1</dd>
              </PromoStat>
              <PromoStat $right $color="#ff6b68">
                <dt>Average Loss:</dt>
                <dd>₹3,705</dd>
              </PromoStat>
            </PromoStats>
            <TradeButton>
              Trade Now
              <ClickIcon />
            </TradeButton>
          </PromoCard>
        </Glass>
      </Promo>
    </Stage>
  );
}
